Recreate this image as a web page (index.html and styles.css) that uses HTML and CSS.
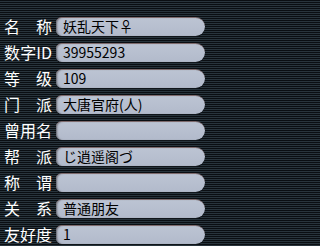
FILE: index.html
```html
<!DOCTYPE html>
<html lang="zh-CN">
<head>
<meta charset="utf-8">
<link rel="stylesheet" href="styles.css">
</head>
<body>
<div class="panel">
  <div class="row"><span class="label">名称</span><span class="field">妖乱天下♀</span></div>
  <div class="row"><span class="label">数字ID</span><span class="field">39955293</span></div>
  <div class="row"><span class="label">等级</span><span class="field">109</span></div>
  <div class="row"><span class="label">门派</span><span class="field">大唐官府(人)</span></div>
  <div class="row"><span class="label">曾用名</span><span class="field"></span></div>
  <div class="row"><span class="label">帮派</span><span class="field">じ逍遥阁づ</span></div>
  <div class="row"><span class="label">称谓</span><span class="field"></span></div>
  <div class="row"><span class="label">关系</span><span class="field">普通朋友</span></div>
  <div class="row"><span class="label">友好度</span><span class="field">1</span></div>
</div>
</body>
</html>
```
FILE: styles.css
```css
html, body {
  margin: 0;
  padding: 0;
  width: 209px;
  height: 246px;
  overflow: hidden;
  background: repeating-linear-gradient(to bottom, #0a0e12 0px, #0a0e12 1px, #28343c 1px, #28343c 2px);
}
.panel {
  padding: 17px 4px 0 4px;
  display: flex;
  flex-direction: column;
  gap: 7px;
  font-family: "Noto Sans CJK SC", "DejaVu Sans", sans-serif;
}
.row {
  display: flex;
  align-items: center;
  gap: 4px;
  height: 19px;
}
.label {
  width: 48px;
  color: #ffffff;
  font-size: 16px;
  line-height: 19px;
  text-align: justify;
  text-align-last: justify;
  text-justify: inter-character;
  white-space: nowrap;
}
.field {
  flex: 1;
  box-sizing: border-box;
  height: 19px;
  padding-left: 7px;
  background: linear-gradient(to bottom, #bcc4d3, #b2bacb);
  border-top: 1px solid #7e6a6c;
  border-radius: 6px 10px 10px 6px;
  box-shadow: inset 2px 0 2px -1px #5f6068, 0 1px 0 #10151a;
  color: #000000;
  font-size: 14px;
  line-height: 17px;
  white-space: nowrap;
  overflow: hidden;
}
```
